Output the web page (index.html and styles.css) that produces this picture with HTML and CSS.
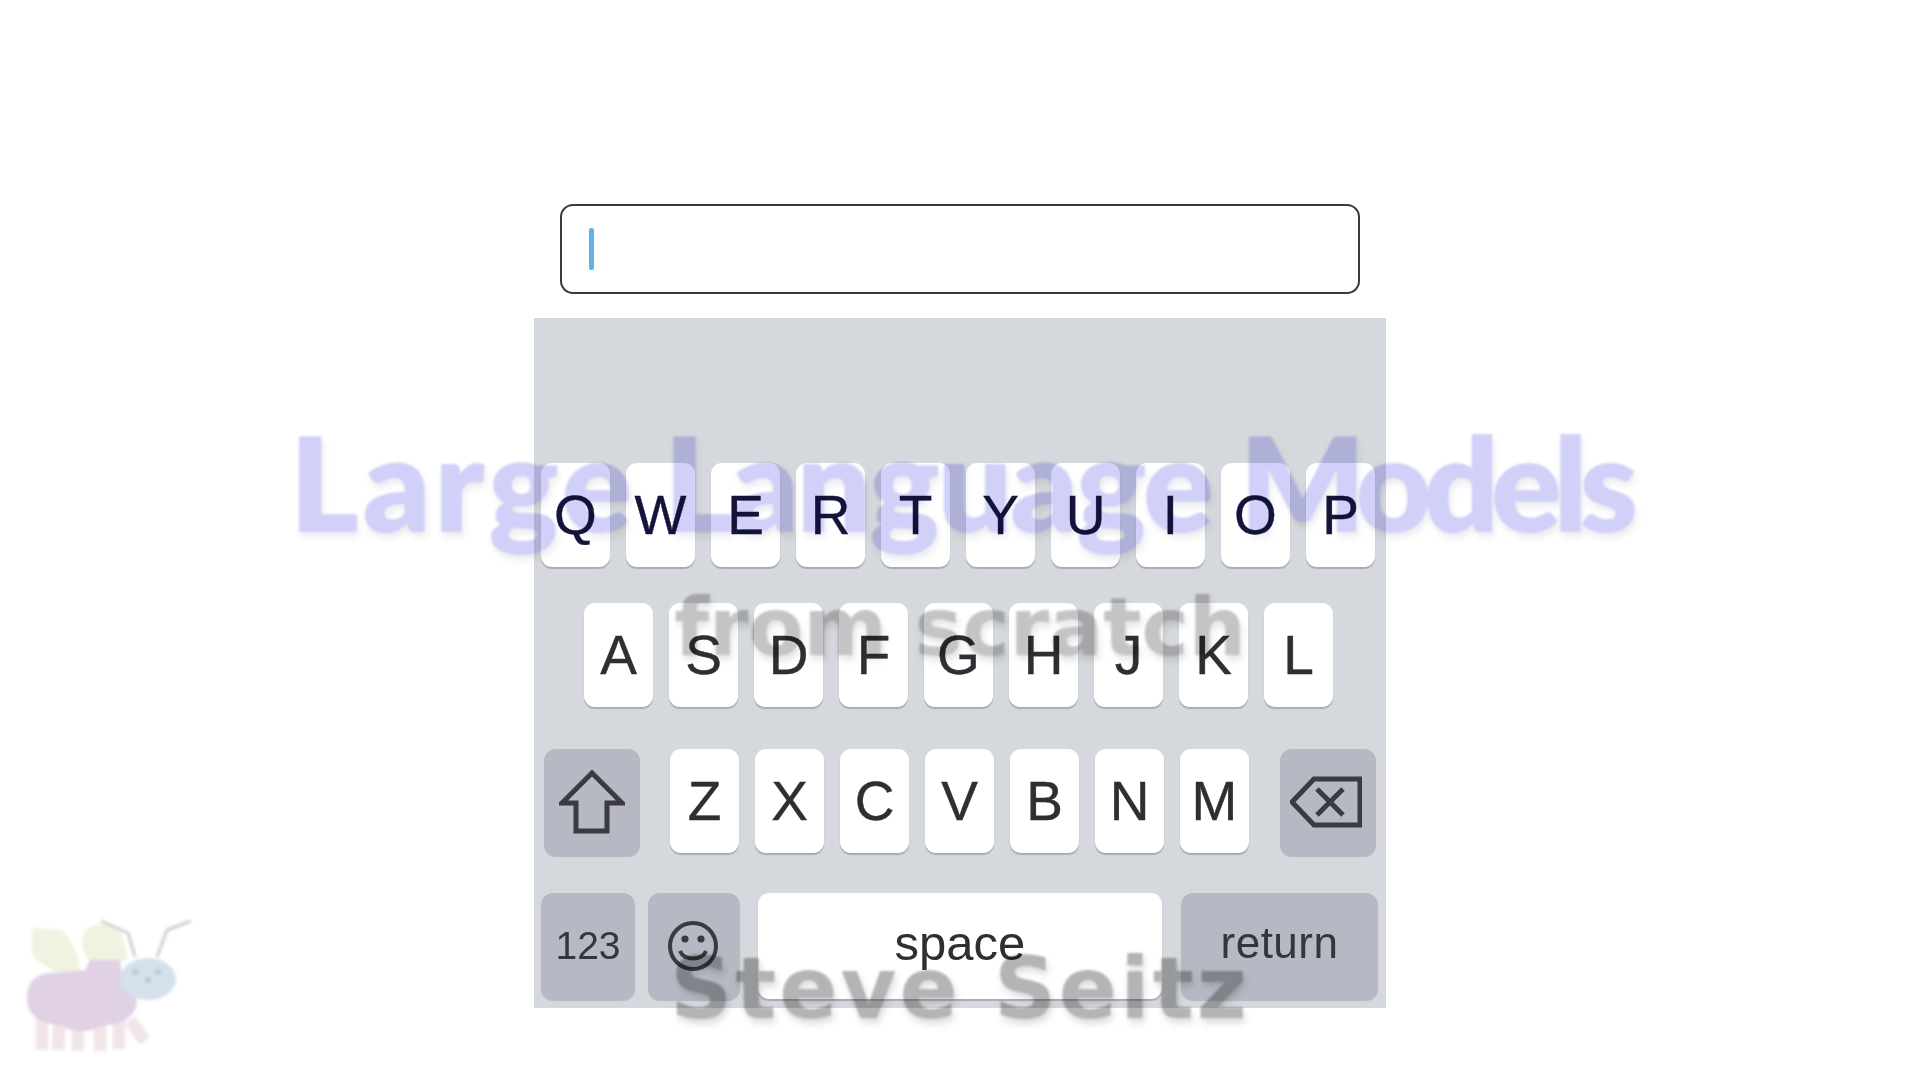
FILE: index.html
```html
<!DOCTYPE html>
<html lang="en">
<head>
<meta charset="utf-8">
<title>Large Language Models from scratch</title>
<link rel="stylesheet" href="styles.css">
</head>
<body>
<main class="stage">
  <div class="field"><span class="caret"></span></div>
  <section class="keyboard">
    <div class="row row-q">
      <div class="key dark">Q</div><div class="key dark">W</div><div class="key dark">E</div><div class="key dark">R</div><div class="key dark">T</div><div class="key dark">Y</div><div class="key dark">U</div><div class="key dark">I</div><div class="key dark">O</div><div class="key dark">P</div>
    </div>
    <div class="row row-a">
      <div class="key">A</div><div class="key">S</div><div class="key">D</div><div class="key">F</div><div class="key">G</div><div class="key">H</div><div class="key">J</div><div class="key">K</div><div class="key">L</div>
    </div>
    <div class="row row-z">
      <div class="fn shift">
        <svg class="icon-shift" viewBox="0 0 66 64"><path d="M33 3 L3 33 H17 V61 H48 V33 H63 Z"/></svg>
      </div>
      <div class="letters">
        <div class="key">Z</div><div class="key">X</div><div class="key">C</div><div class="key">V</div><div class="key">B</div><div class="key">N</div><div class="key">M</div>
      </div>
      <div class="fn back">
        <svg class="icon-back" viewBox="0 0 72 52"><path d="M2 26 L24 3 H70 V49 H24 Z"/><path d="M27 13 L53 39 M53 13 L27 39"/></svg>
      </div>
    </div>
    <div class="row row-b">
      <div class="fn num">123</div>
      <div class="fn emoji">
        <svg class="icon-smile" viewBox="0 0 52 52"><circle cx="26" cy="26" r="23"/><circle class="eye" cx="18" cy="19" r="3.6"/><circle class="eye" cx="34" cy="19" r="3.6"/><path d="M13 31 C17 41 35 41 39 31"/></svg>
      </div>
      <div class="key space"><span class="lift">space</span></div>
      <div class="fn ret"><span class="lift">return</span></div>
    </div>
  </section>
</main>
<div class="title title-main"><span class="w-large">Large</span> Language <span class="w-models">Models</span></div>
<div class="title title-sub">from scratch</div>
<div class="title title-author">Steve Seitz</div>
<svg class="bee" viewBox="0 0 220 190">
  <g class="bee-legs">
    <path d="M42 128 L42 160"/><path d="M60 128 L58 160"/><path d="M78 135 L78 161"/><path d="M100 130 L100 161"/><path d="M119 128 L119 159"/><path d="M130 130 L145 151"/>
  </g>
  <path class="bee-wing" d="M32 38 L62 40 C75 55 80 70 80 85 L60 85 C45 75 32 70 32 60 Z"/>
  <path class="bee-wing" d="M85 40 C95 33 115 32 122 45 L128 70 L88 70 C82 60 80 50 85 40 Z"/>
  <path class="bee-body" d="M27 108 C27 90 38 82 55 83 L85 80 L90 70 L120 70 L122 85 L137 110 C137 128 120 135 100 136 C90 143 70 143 62 135 C40 135 27 125 27 108 Z"/>
  <ellipse class="bee-head" cx="148" cy="89" rx="28" ry="21"/>
  <circle class="bee-eye" cx="135" cy="82" r="3"/><circle class="bee-eye" cx="158" cy="82" r="3"/><circle class="bee-eye" cx="148" cy="90" r="3"/>
  <path class="bee-ant" d="M135 67 L128 43 L101 31 M157 67 L167 40 L191 31"/>
</svg>
</body>
</html>
```
FILE: styles.css
```css
html, body { margin: 0; padding: 0; background: #fff; }
body { width: 1920px; height: 1080px; overflow: hidden; position: relative; font-family: "Liberation Sans", Arial, sans-serif; }
.stage { display: flex; flex-direction: column; align-items: center; padding-top: 204px; }
.field { width: 800px; height: 90px; box-sizing: border-box; border: 2px solid #3a3a3e; border-radius: 13px; background: #fff; display: flex; align-items: center; padding-left: 27px; }
.caret { display: block; width: 5px; height: 42px; background: #5fb2e8; border-radius: 2px; }
.keyboard { width: 852px; height: 690px; margin-top: 24px; background: #d5d8dc; box-sizing: border-box; padding-top: 145px; display: flex; flex-direction: column; }
.row { display: flex; height: 104px; }
.row-q { gap: 16px; padding-left: 7px; }
.row-a { gap: 16px; padding-left: 50px; margin-top: 36px; }
.row-z { padding-left: 10px; margin-top: 42px; }
.row-b { padding-left: 7px; margin-top: 40px; height: 106px; }
.letters { display: flex; gap: 16px; margin-left: 30px; margin-right: 31px; }
.key { width: 69px; height: 104px; background: #fff; border-radius: 11px; box-shadow: 0 2px 1px rgba(90, 90, 100, .35); display: flex; align-items: center; justify-content: center; font-size: 55px; color: #2e2e33; -webkit-text-stroke: .4px currentColor; }
.key.dark { color: #14143a; }
.fn { height: 106px; background: #b6b9c3; border-radius: 12px; box-shadow: 0 2px 1px rgba(90, 90, 100, .25); display: flex; align-items: center; justify-content: center; color: #35353a; }
.shift, .back { width: 96px; }
.num { width: 94px; font-size: 39px; margin-right: 13px; }
.emoji { width: 92px; margin-right: 18px; }
.key.space { width: 404px; height: 106px; font-size: 49px; margin-right: 20px; -webkit-text-stroke: 0; }
.ret { width: 197px; font-size: 44px; margin-left: -1px; letter-spacing: .5px; }
.lift { display: block; transform: translateY(-3px); }
.icon-shift path, .icon-back path, .icon-smile path, .icon-smile circle { fill: none; stroke: #3a3a40; }
.icon-shift { width: 66px; height: 64px; }
.icon-shift path { stroke-width: 5; stroke-linejoin: miter; }
.icon-back { width: 72px; height: 52px; margin-left: -4px; }
.icon-back path { stroke-width: 5; }
.icon-smile { width: 52px; height: 52px; margin-left: -2px; }
.icon-smile circle, .icon-smile path { stroke-width: 4; }
.icon-smile .eye { fill: #3a3a40; stroke: none; }
.title { position: absolute; left: 0; width: 1920px; text-align: center; white-space: nowrap; filter: blur(1.3px); mix-blend-mode: multiply; }
.title-main { top: 402px; font-family: Lato, sans-serif; font-weight: 800; font-size: 131px; line-height: 160px; letter-spacing: -2px; color: #d0d0f8; text-shadow: 2px 5px 6px rgba(150, 150, 170, .18); }
.w-large { letter-spacing: 4px; }
.w-models { letter-spacing: -8px; }
.title-sub { top: 578px; font-family: "DejaVu Sans", sans-serif; font-weight: 700; font-size: 80px; line-height: 100px; color: #c4c4c4; text-shadow: 2px 5px 6px rgba(120, 120, 120, .2); }
.title-author { top: 938px; font-family: "DejaVu Sans", sans-serif; font-weight: 700; font-size: 86px; line-height: 100px; letter-spacing: 3px; color: #b4b4b4; text-shadow: 2px 5px 6px rgba(120, 120, 120, .25); }
.bee { position: absolute; left: 0; top: 890px; width: 220px; height: 190px; filter: blur(1.5px); overflow: visible; }
.bee-legs path { stroke: #f0e6e8; stroke-width: 13; fill: none; }
.bee-wing { fill: #eff3df; }
.bee-body { fill: #e0d1e5; }
.bee-head { fill: #d4e0ec; }
.bee-eye { fill: #bcc8d6; }
.bee-ant { stroke: #cfcfcf; stroke-width: 3; fill: none; }
```
